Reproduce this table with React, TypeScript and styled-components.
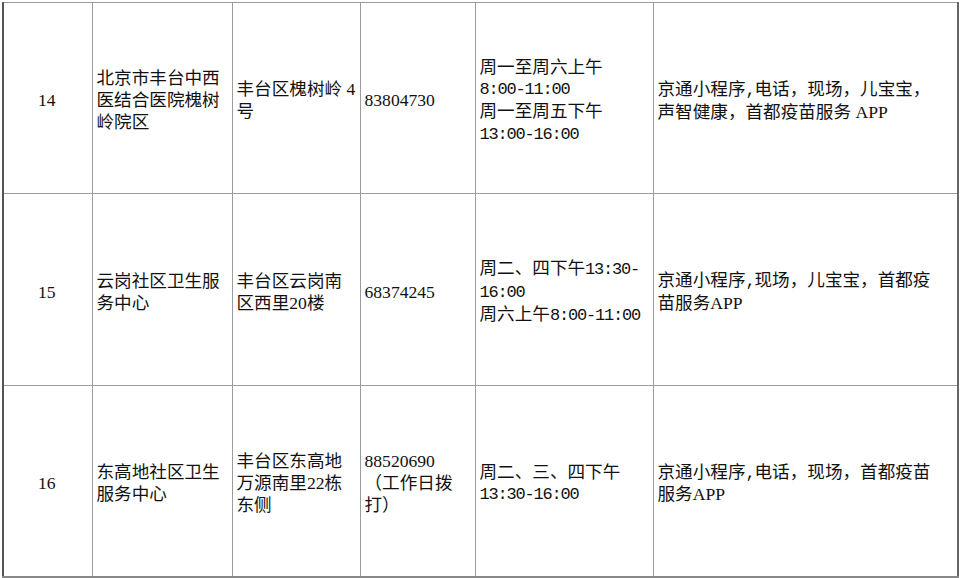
import React from 'react';
import styled, { createGlobalStyle } from 'styled-components';

const GlobalStyle = createGlobalStyle`
  html, body {
    margin: 0;
    background: #ffffff;
  }
  body {
    padding: 2px 0 0 2px;
  }
`;

const Table = styled.table`
  border-collapse: collapse;
  table-layout: fixed;
  width: 956px;
  border-left: 2px solid #555;
  border-right: 2px solid #666;
  border-top: 1px solid #999;
  border-bottom: 2px solid #888;
  font-family: 'Liberation Serif', 'Noto Sans CJK SC', serif;
  font-size: 17.6px;
  line-height: 21.7px;
  color: #111;
`;

const Row = styled.tr<{ $h: number }>`
  height: ${(p) => p.$h}px;
`;

const Cell = styled.td<{ $center?: boolean }>`
  border: 1px solid #9c9c9c;
  padding: 6px 2px 0 ${(p) => (p.$center ? 0 : 4)}px;
  vertical-align: middle;
  text-align: ${(p) => (p.$center ? 'center' : 'left')};
  white-space: nowrap;
  overflow: hidden;
`;

const Mono = styled.span`
  font-family: 'Liberation Mono', monospace;
  font-size: 17px;
  letter-spacing: -1.2px;
`;

const widths = [89, 140, 128, 115, 178, 305];

type Entry = {
  no: string;
  name: string[];
  addr: string[];
  phone: string[];
  hours: React.ReactNode[];
  ways: React.ReactNode[];
  h: number;
};

const rows: Entry[] = [
  {
    no: '14',
    name: ['北京市丰台中西', '医结合医院槐树', '岭院区'],
    addr: ['丰台区槐树岭 4', '号'],
    phone: ['83804730'],
    hours: ['周一至周六上午', <Mono>8:00-11:00</Mono>, '周一至周五下午', <Mono>13:00-16:00</Mono>],
    ways: [<>京通小程序<Mono>,</Mono>电话，现场，儿宝宝，</>, '声智健康，首都疫苗服务 APP'],
    h: 191,
  },
  {
    no: '15',
    name: ['云岗社区卫生服', '务中心'],
    addr: ['丰台区云岗南', '区西里20楼'],
    phone: ['68374245'],
    hours: [
      <>周二、四下午<Mono>13:30-</Mono></>,
      <Mono>16:00</Mono>,
      <>周六上午<Mono>8:00-11:00</Mono></>,
    ],
    ways: [<>京通小程序<Mono>,</Mono>现场，儿宝宝，首都疫</>, '苗服务APP'],
    h: 192,
  },
  {
    no: '16',
    name: ['东高地社区卫生', '服务中心'],
    addr: ['丰台区东高地', '万源南里22栋', '东侧'],
    phone: ['88520690', '（工作日拨', '打）'],
    hours: ['周二、三、四下午', <Mono>13:30-16:00</Mono>],
    ways: [<>京通小程序<Mono>,</Mono>电话，现场，首都疫苗</>, '服务APP'],
    h: 191,
  },
];

const Lines: React.FC<{ items: React.ReactNode[] }> = ({ items }) => (
  <>
    {items.map((item, i) => (
      <React.Fragment key={i}>
        {i > 0 && <br />}
        {item}
      </React.Fragment>
    ))}
  </>
);

const App: React.FC = () => (
  <>
    <GlobalStyle />
    <Table>
      <colgroup>
        {widths.map((w, i) => (
          <col key={i} style={{ width: w }} />
        ))}
      </colgroup>
      <tbody>
        {rows.map((r) => (
          <Row key={r.no} $h={r.h}>
            <Cell $center>{r.no}</Cell>
            <Cell>
              <Lines items={r.name} />
            </Cell>
            <Cell>
              <Lines items={r.addr} />
            </Cell>
            <Cell>
              <Lines items={r.phone} />
            </Cell>
            <Cell>
              <Lines items={r.hours} />
            </Cell>
            <Cell>
              <Lines items={r.ways} />
            </Cell>
          </Row>
        ))}
      </tbody>
    </Table>
  </>
);

export default App;
